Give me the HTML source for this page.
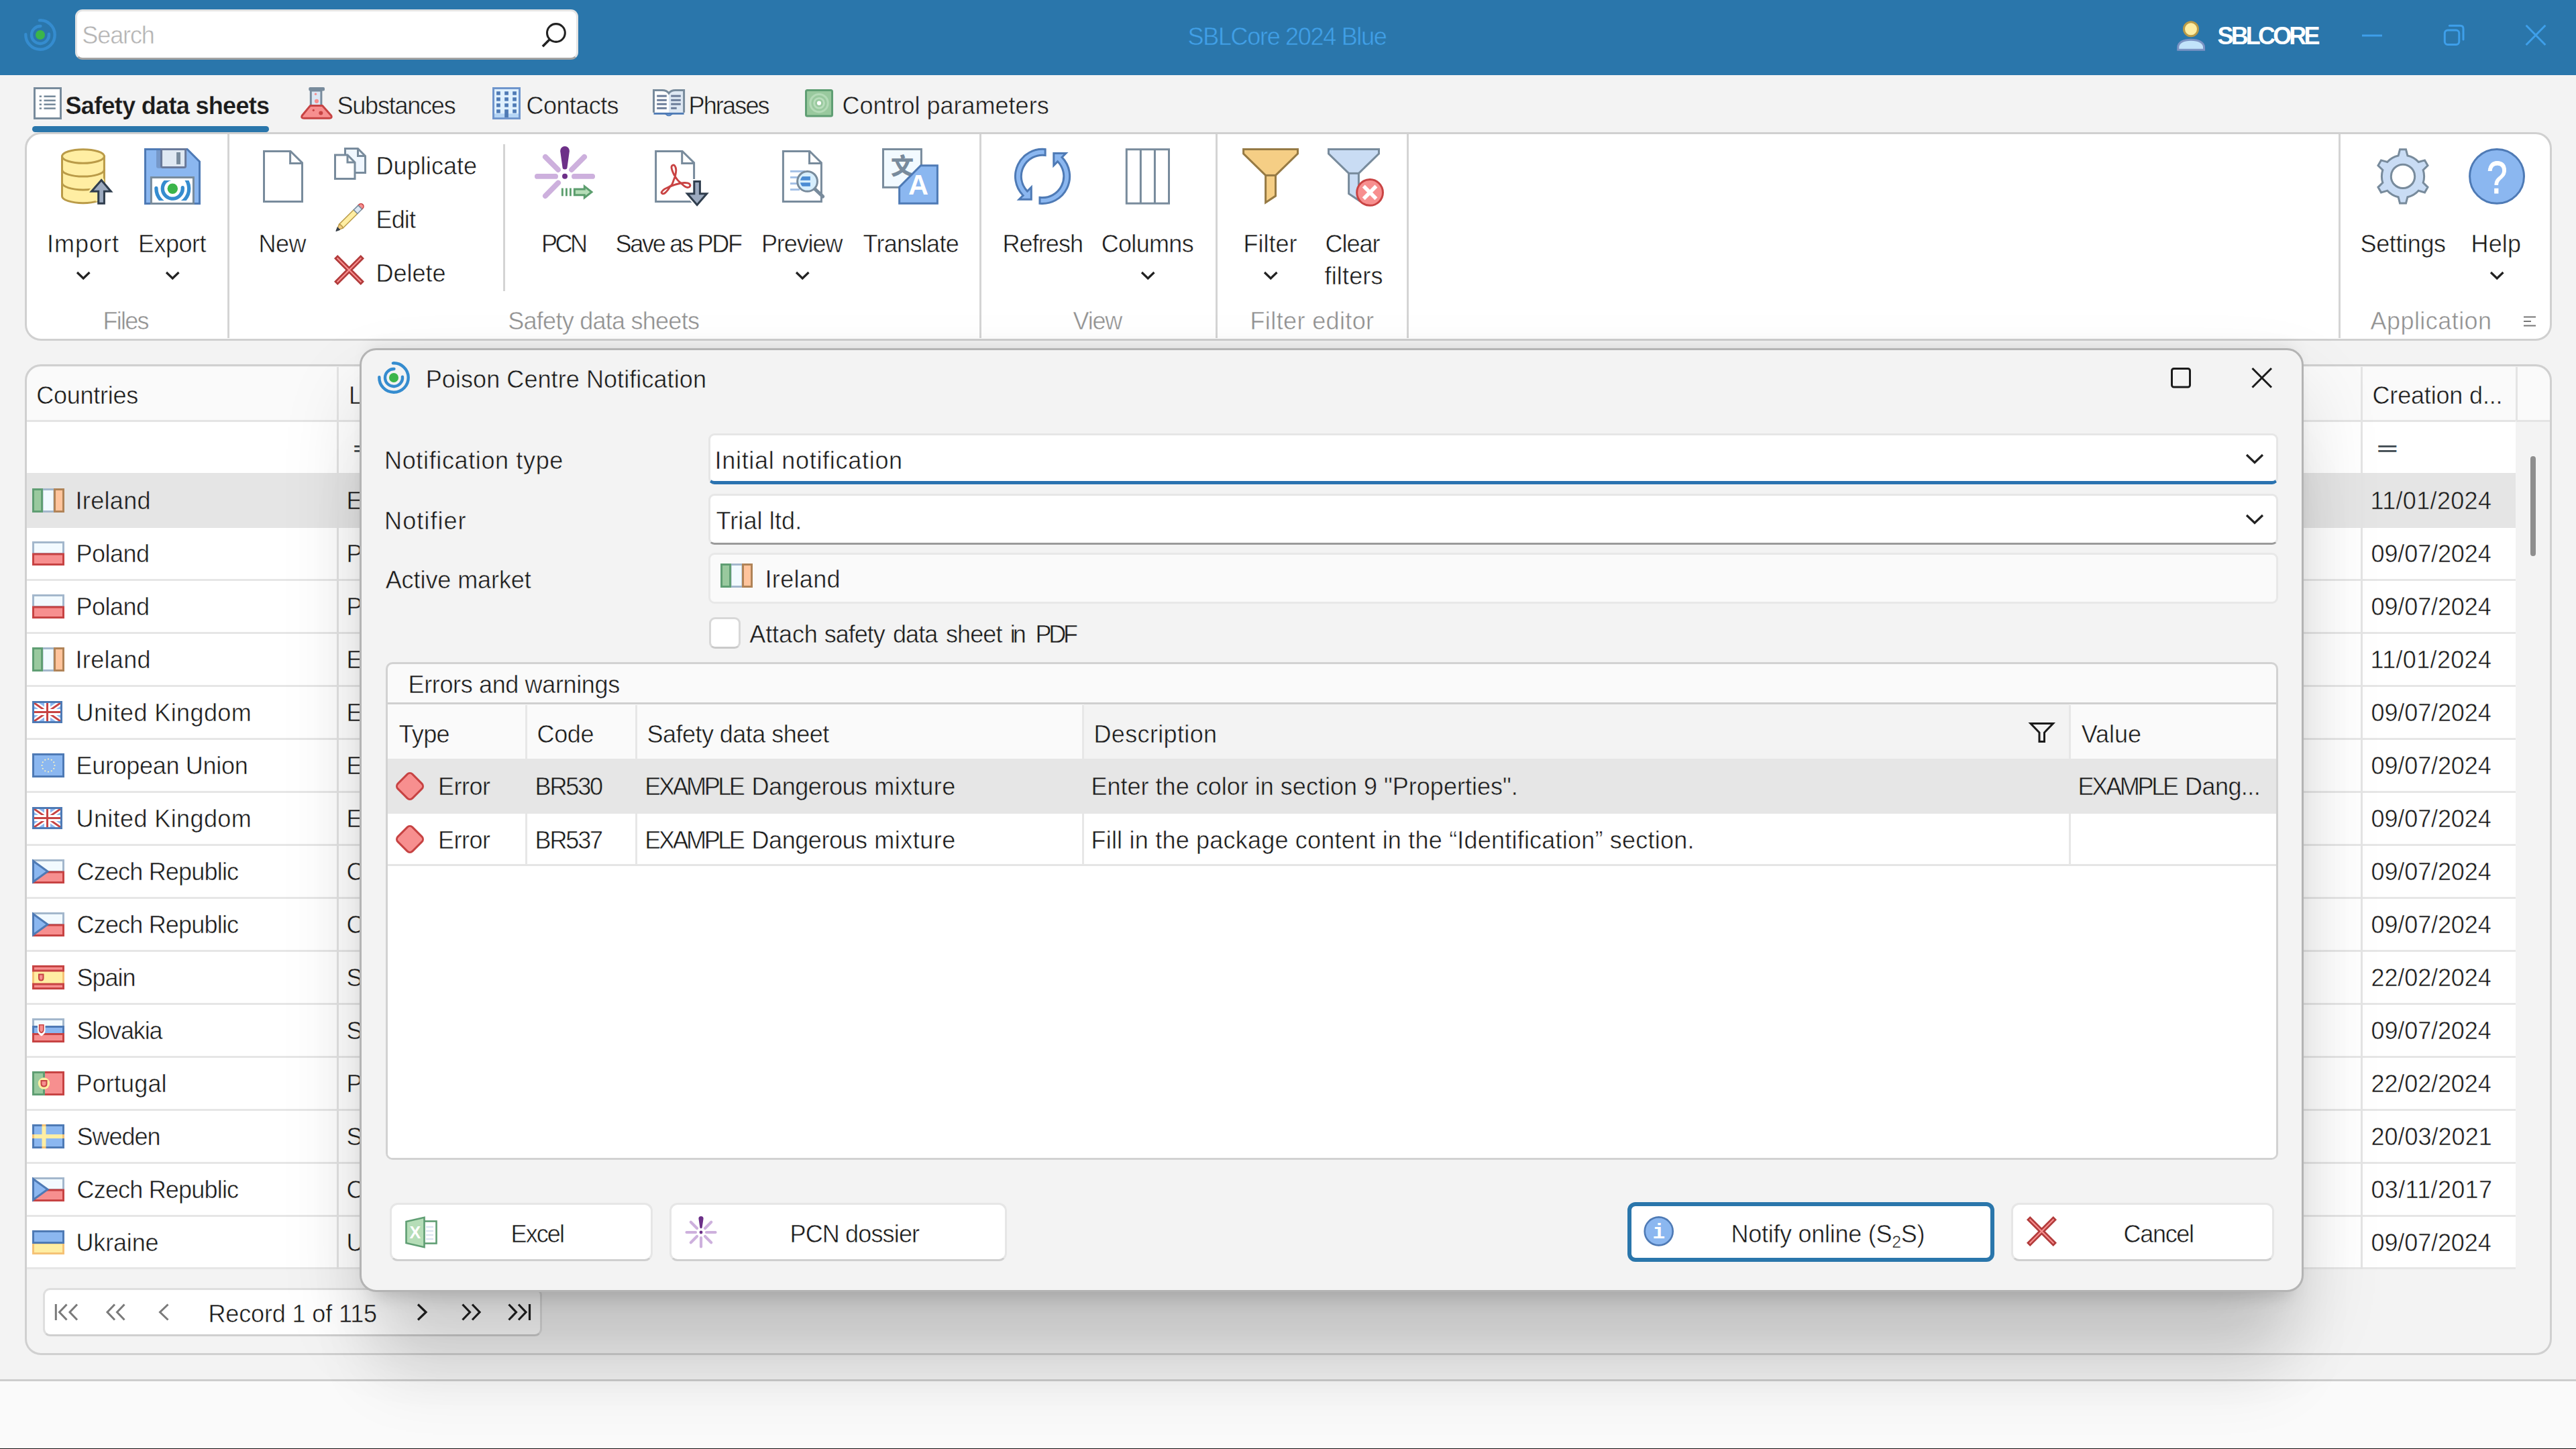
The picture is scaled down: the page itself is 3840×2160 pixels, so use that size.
<!DOCTYPE html>
<html lang="en"><head><meta charset="utf-8"><title>SBLCore 2024 Blue</title>
<style>
html,body{margin:0;padding:0;background:#f3f3f3}
body{width:3840px;height:2160px;overflow:hidden;position:relative;font-family:"Liberation Sans",sans-serif;font-size:36px;color:#1b1b1b}
#app{position:absolute;left:0;top:0;width:3840px;height:2160px;overflow:hidden;background:#f3f3f3}
.b{position:absolute;box-sizing:border-box}
.i{position:absolute;overflow:visible}
.t{position:absolute;white-space:nowrap;line-height:40px;height:40px;-webkit-text-stroke:.5px #fff}
.g3{-webkit-text-stroke-color:#f3f3f3}
.ga{-webkit-text-stroke-color:#fafafa}
.g5{-webkit-text-stroke-color:#e5e5e5}
.tb{-webkit-text-stroke-color:#2A76AB}
.bold{font-weight:700;-webkit-text-stroke-width:.25px}
.ph{color:#b4b4b4}
.ttl{color:#41A0E8}
.usr{color:#fff;font-weight:700;-webkit-text-stroke-width:0}
.grp{color:#919191}
.eq{color:#3f4a50;font-weight:700;-webkit-text-stroke-width:0;transform:scale(1.5,.72);transform-origin:0 55%}
.sub{font-size:25px;position:relative;top:8px}
.panel{border:3.5px solid #d0d0d0;border-radius:24px}
.search{background:#fff;border:3px solid #e4e4e4;border-bottom-color:#a3a3a3;border-radius:11px}
.dlg{background:#f3f3f3;border:3px solid #b4b4b4;border-radius:25px;box-shadow:0 150px 100px -30px rgba(0,0,0,.11),0 60px 120px rgba(0,0,0,.13),0 -14px 24px -12px rgba(0,0,0,.085),0 24px 28px -20px rgba(0,0,0,.18)}
.fld{background:#fff;border:3px solid #e6e6e6;border-radius:9px}
.btn{background:#fff;border:3px solid #e6e6e6;border-bottom-color:#cfcfcf;border-radius:12px}
</style></head>
<body><div id="app">
<div class="b" style="left:0;top:0;width:3840px;height:112px;background:#2A76AB"></div>
<svg class="i" style="left:34px;top:26px" width="52" height="52" viewBox="0 0 52 52"><circle cx="26" cy="26" r="7" fill="#3BB54A"/><path d="M26.45 13.01 A13 13 0 1 0 38.93 24.64 M24.86 4.33 A21.7 21.7 0 1 1 4.31 25.24" fill="none" stroke="#358CCF" stroke-width="4.4" stroke-linecap="round"/></svg>
<div class="b search" style="left:112px;top:14px;width:750px;height:75px"></div>
<span class="t ph" style="left:122.3px;top:33px;letter-spacing:-1.1px">Search</span>
<svg class="i" style="left:800px;top:30px" width="50" height="50" viewBox="0 0 50 50"><circle cx="28.9" cy="19" r="13.4" fill="none" stroke="#222" stroke-width="3.1"/><path d="M19.6 28.6 L8.9 39.3" stroke="#222" stroke-width="3.6"/></svg>
<span class="t ttl tb" style="left:1770.5px;top:34.5px;letter-spacing:-1.31px">SBLCore 2024 Blue</span>
<svg class="i" style="left:3240px;top:25px" width="52" height="56" viewBox="0 0 52 56"><path d="M6.7 49.2 V46 C6.7 38 15 34.3 26 34.3 C37 34.3 45.6 38 45.6 46 V49.2 Z" fill="#C2E3FA" stroke="#7B93C4" stroke-width="3"/><circle cx="26" cy="18.3" r="10.5" fill="#FFEEA3" stroke="#BA9B48" stroke-width="3"/></svg>
<span class="t usr tb" style="left:3305.5px;top:34px;letter-spacing:-3.83px">SBLCORE</span>
<svg class="i" style="left:3520px;top:25px" width="300" height="56" viewBox="0 0 300 56"><path d="M1 28 H31" stroke="#3E9FEA" stroke-width="3" fill="none"/><rect x="124.3" y="20" width="21.5" height="21.5" rx="4.5" fill="none" stroke="#3E9FEA" stroke-width="3"/><path d="M131.3 13.3 H147.5 Q152 13.3 152 17.8 V34 " fill="none" stroke="#3E9FEA" stroke-width="3" stroke-linecap="round"/><path d="M245.6 12.8 L274.4 42 M274.4 12.8 L245.6 42" stroke="#3E9FEA" stroke-width="3" fill="none"/></svg>
<svg class="i" style="left:50px;top:130px" width="42" height="48" viewBox="0 0 42 48"><rect x="1.5" y="1.5" width="39" height="45" fill="#fff" stroke="#788B9C" stroke-width="3"/><rect x="8.7" y="12.4" width="3.3" height="2.6" fill="#788B9C"/><rect x="15.5" y="12.4" width="17.3" height="2.6" fill="#788B9C"/><rect x="8.7" y="18.5" width="3.3" height="2.6" fill="#788B9C"/><rect x="15.5" y="18.5" width="17.3" height="2.6" fill="#788B9C"/><rect x="8.7" y="24.4" width="3.3" height="2.6" fill="#788B9C"/><rect x="15.5" y="24.4" width="17.3" height="2.6" fill="#788B9C"/><rect x="8.7" y="30.3" width="3.3" height="2.6" fill="#788B9C"/><rect x="15.5" y="30.3" width="17.3" height="2.6" fill="#788B9C"/></svg>
<span class="t bold g3" style="left:97.5px;top:137.5px;letter-spacing:-0.68px">Safety data sheets</span>
<div class="b" style="left:48px;top:188px;width:353.3px;height:8.7px;border-radius:4.4px;background:#2A76AB"></div>
<svg class="i" style="left:448px;top:130px" width="48" height="48" viewBox="0 0 48 48"><rect x="15.3" y="5" width="15.6" height="24" fill="#DCE8F4" stroke="#788B9C" stroke-width="3"/><rect x="12.3" y="0" width="23.7" height="5.6" rx="1.8" fill="#788B9C"/><path d="M14.6 27.4 L2.3 42.2 Q0.3 46.3 5 46.3 H43 Q47.6 46.3 45.7 42.2 L32.6 27.4 Z" fill="#F78F8F" stroke="#C74343" stroke-width="3" stroke-linejoin="round"/><circle cx="22.5" cy="10.3" r="1.7" fill="#F78F8F"/><circle cx="24" cy="20.8" r="3.1" fill="#F78F8F"/><circle cx="19.3" cy="34.3" r="1.6" fill="#C74343"/><circle cx="30.3" cy="38.5" r="3" fill="#C74343"/></svg>
<span class="t g3" style="left:502.5px;top:137.5px;letter-spacing:-1.22px">Substances</span>
<svg class="i" style="left:734px;top:130px" width="42" height="48" viewBox="0 0 42 48"><rect x="1.5" y="1.5" width="39" height="45" fill="#DFF0FE" stroke="#6F95CC" stroke-width="3"/><rect x="3" y="39.4" width="36" height="5.7" fill="#B5D5F5"/><rect x="6.1" y="6.3" width="5.7" height="5.4" fill="#4E7AB5"/><rect x="6.1" y="15.2" width="5.7" height="5.4" fill="#4E7AB5"/><rect x="6.1" y="24.2" width="5.7" height="5.4" fill="#4E7AB5"/><rect x="6.1" y="33.2" width="5.7" height="5.4" fill="#4E7AB5"/><rect x="18.2" y="6.3" width="5.7" height="5.4" fill="#4E7AB5"/><rect x="18.2" y="15.2" width="5.7" height="5.4" fill="#4E7AB5"/><rect x="18.2" y="24.2" width="5.7" height="5.4" fill="#4E7AB5"/><rect x="30.2" y="6.3" width="5.7" height="5.4" fill="#4E7AB5"/><rect x="30.2" y="15.2" width="5.7" height="5.4" fill="#4E7AB5"/><rect x="30.2" y="24.2" width="5.7" height="5.4" fill="#4E7AB5"/><rect x="30.2" y="33.2" width="5.7" height="5.4" fill="#4E7AB5"/><rect x="18.2" y="33.2" width="5.7" height="11.9" fill="#4E7AB5"/></svg>
<span class="t g3" style="left:784.5px;top:137.5px;letter-spacing:-0.57px">Contacts</span>
<svg class="i" style="left:973px;top:133.2px" width="48.2" height="44" viewBox="0 0 48.2 44"><path d="M1.5 36.2 H46.6" stroke="#4E7AB5" stroke-width="3.2"/><path d="M19 37 Q24 42 29 37 Z" fill="#8BB7F0" stroke="#4E7AB5" stroke-width="1.5"/><path d="M24 6 Q21 1.5 14 1.5 H1.5 V34.7 H24 Z" fill="#fff"/><path d="M24 6 Q27 1.5 34 1.5 H46.6 V34.7 H24 Z" fill="#DEE8F3"/><path d="M1.5 34.7 V1.5 H14 Q21 1.5 24 6 Q27 1.5 34 1.5 H46.6 V34.7" fill="none" stroke="#788B9C" stroke-width="3"/><rect x="6.2" y="8.6" width="14.6" height="3" fill="#6B7C99"/><rect x="27.2" y="8.6" width="14.6" height="3" fill="#6B7C99"/><rect x="6.2" y="14.8" width="14.6" height="3" fill="#6B7C99"/><rect x="27.2" y="14.8" width="14.6" height="3" fill="#6B7C99"/><rect x="6.2" y="20.7" width="14.6" height="3" fill="#6B7C99"/><rect x="27.2" y="20.7" width="14.6" height="3" fill="#6B7C99"/><rect x="6.2" y="26.8" width="14.6" height="3" fill="#6B7C99"/><rect x="27.2" y="26.8" width="8.5" height="3" fill="#6B7C99"/></svg>
<span class="t g3" style="left:1026.5px;top:137.5px;letter-spacing:-1.83px">Phrases</span>
<svg class="i" style="left:1200px;top:133.2px" width="42" height="42" viewBox="0 0 42 42"><rect x="1.5" y="1.5" width="39" height="38.5" rx="2" fill="#99C99E" stroke="#5F9E73" stroke-width="3"/><circle cx="21" cy="20.7" r="14.7" fill="#B4DAB7"/><circle cx="21" cy="20.7" r="11.6" fill="#99C99E"/><circle cx="21" cy="20.7" r="8.8" fill="#B9DDBC"/><circle cx="21" cy="20.7" r="6" fill="#99C99E"/><circle cx="21" cy="20.7" r="3.1" fill="#fff"/></svg>
<span class="t g3" style="left:1255.5px;top:137.5px">Control parameters</span>
<div class="b panel" style="left:36.5px;top:197px;width:3767.5px;height:310.5px;background:#fff"></div>
<div class="b" style="left:338.5px;top:200px;width:3.2px;height:304px;background:#d4d4d4"></div>
<div class="b" style="left:1459.5px;top:200px;width:3.2px;height:304px;background:#d4d4d4"></div>
<div class="b" style="left:1811.5px;top:200px;width:3.2px;height:304px;background:#d4d4d4"></div>
<div class="b" style="left:2096.5px;top:200px;width:3.2px;height:304px;background:#d4d4d4"></div>
<div class="b" style="left:3485.5px;top:200px;width:3.2px;height:304px;background:#d4d4d4"></div>
<div class="b" style="left:750px;top:215px;width:3px;height:219px;background:#d4d4d4"></div>
<svg class="i" style="left:84px;top:216px" width="90" height="92" viewBox="84 216 90 92"><clipPath id="cyl"><path d="M92.5 233 V292.4 A31.45 10.3 0 0 0 155.4 292.4 V233 A31.45 10.3 0 0 0 92.5 233 Z"/></clipPath><path d="M92.5 233 V292.4 A31.45 10.3 0 0 0 155.4 292.4 V233 Z" fill="#FFEEA3" stroke="#BA9B48" stroke-width="3"/><ellipse cx="123.95" cy="233" rx="31.45" ry="10.3" fill="#FFEEA3" stroke="#BA9B48" stroke-width="3"/><path d="M92.5 252.8 A31.45 10.3 0 0 0 155.4 252.8 M92.5 272.6 A31.45 10.3 0 0 0 155.4 272.6" fill="none" stroke="#BA9B48" stroke-width="3"/><path d="M151.1 268.56 L165.35 285.25 H155.4 V303.3 H146.7 V285.25 H136.45 Z" fill="#FFEEA3" stroke="#FFEEA3" stroke-width="8" clip-path="url(#cyl)"/><path d="M151.1 268.56 L165.35 285.25 H155.4 V303.3 H146.7 V285.25 H136.45 Z" fill="#9CAABF" stroke="#2F3D4D" stroke-width="3"/></svg>
<span class="t" style="left:69.9px;top:344px;letter-spacing:1px">Import</span>
<svg class="i" style="left:112.85px;top:403.5px" width="22.5" height="14" viewBox="0 0 22.5 14"><path d="M2 2 L11.25 11 L20.5 2" fill="none" stroke="#222" stroke-width="3.2"/></svg>
<svg class="i" style="left:210px;top:216px" width="96" height="92" viewBox="210 216 96 92"><path d="M216.5 222.4 H279.1 L297.5 240.9 V303.4 H216.5 Z" fill="#8BB7F0" stroke="#4E7AB5" stroke-width="3"/><path d="M233 223.9 H240 V250.7 H236 Q233 250.7 233 247.7 Z" fill="#7698C9"/><path d="M240.55 222.4 H276.6 V247.5 Q276.6 249.5 274.6 249.5 H242.55 Q240.55 249.5 240.55 247.5 Z" fill="#DFE8F2" stroke="#69799A" stroke-width="3"/><rect x="263.05" y="227" width="5.95" height="17.9" fill="#788B9C"/><rect x="225.4" y="264.5" width="63" height="39" fill="#fff" stroke="#788B9C" stroke-width="3"/><clipPath id="lbl"><rect x="227" y="269" width="60" height="29.9"/></clipPath><g clip-path="url(#lbl)"><circle cx="257.3" cy="281.2" r="7.7" fill="#3BB54A"/><path d="M257.82 266.21 A15 15 0 1 0 272.22 279.63 M256.02 256.83 A24.4 24.4 0 1 1 232.91 280.35" fill="none" stroke="#358CCF" stroke-width="5.3" stroke-linecap="round"/></g></svg>
<span class="t" style="left:205.9px;top:344px;letter-spacing:-0.5px">Export</span>
<svg class="i" style="left:245.75px;top:403.5px" width="22.5" height="14" viewBox="0 0 22.5 14"><path d="M2 2 L11.25 11 L20.5 2" fill="none" stroke="#222" stroke-width="3.2"/></svg>
<svg class="i" style="left:380px;top:216px" width="96" height="92" viewBox="380 216 96 92"><path d="M393.5 225.4 H433.1 L450.5 242.6 V300.4 H393.5 Z" fill="#fff" stroke="#788B9C" stroke-width="3"/><path d="M432.6 225.4 V243.4 H450.5" fill="none" stroke="#788B9C" stroke-width="3"/></svg>
<span class="t" style="left:385.5px;top:344px;letter-spacing:-0.5px">New</span>
<svg class="i" style="left:498px;top:220px" width="48" height="48" viewBox="0 0 48 48"><path d="M16.5 1.5 H35.5 L46.5 12.5 V37.5 H16.5 Z" fill="#F0F7FF" stroke="#788B9C" stroke-width="3"/><path d="M35.5 1.5 V12.5 H46.5" fill="none" stroke="#788B9C" stroke-width="3"/><path d="M1.5 11 H20 L31 22 V46.5 H1.5 Z" fill="#fff" stroke="#788B9C" stroke-width="3"/><path d="M20 11 V22 H31" fill="none" stroke="#788B9C" stroke-width="3"/></svg>
<span class="t" style="left:560.5px;top:227.5px;letter-spacing:0.07px">Duplicate</span>
<svg class="i" style="left:498px;top:303px" width="50" height="48" viewBox="0 0 50 48" overflow="visible"><g transform="translate(2.97 41.5) rotate(-44.8)"><path d="M10.5 -4 H41 V4 H10.5 Z" fill="#FFEEA3" stroke="#BA9B48" stroke-width="1.5"/><path d="M1 0 L10.5 -4 Q12.6 0 10.5 4 Z" fill="#F5CE85" stroke="#BA9B48" stroke-width="1.5" stroke-linejoin="round"/><path d="M0 0 L5.4 -2.5 V2.5 Z" fill="#36404D" stroke="#36404D" stroke-width="1" stroke-linejoin="round"/><path d="M50 -4 H52.2 A4 4 0 0 1 52.2 4 H50 Z" fill="#F78F8F" stroke="#C74343" stroke-width="1.5"/><rect x="41" y="-4" width="9.5" height="8" fill="#DCE8F4" stroke="#788B9C" stroke-width="1.5"/></g></svg>
<span class="t" style="left:560.5px;top:307.5px;letter-spacing:-0.83px">Edit</span>
<svg class="i" style="left:498px;top:380.1px" width="45" height="45" viewBox="0 0 45 45"><path d="M2.62 2.62 L42.38 42.38 M42.38 2.62 L2.62 42.38" stroke="#B23B3B" stroke-width="7.4" fill="none"/><path d="M4.52 4.52 L40.48 40.48 M40.48 4.52 L4.52 40.48" stroke="#F78F8F" stroke-width="2" fill="none"/></svg>
<span class="t" style="left:560.5px;top:387.5px">Delete</span>
<svg class="i" style="left:790px;top:210px" width="104" height="96" viewBox="790 210 104 96"><g stroke="#CDB0DD" stroke-width="7.9" stroke-linecap="round" fill="none"><path d="M800.9 262.9 H828.05 M855.95 262.9 H883.1 M812.95 233.9 L832 252.95 M871.05 233.9 L852 252.95 M812.95 292.1 L832.1 272.6"/></g><path d="M835.13 224.9 A6.9 6.9 0 0 1 848.93 224.9 L845.63 249 A3.6 3.6 0 0 1 838.43 249 Z" fill="#6D3088"/><circle cx="842.03" cy="262.8" r="4" fill="#6D3088"/><path d="M838.35 280.44 V292.13 M844.41 280.44 V292.13 M850.41 280.44 V292.13" stroke="#5C9E6E" stroke-width="2.85"/><path d="M856.36 281.94 H871.3 V277.93 L881.96 286.3 L871.3 294.67 V290.63 H856.36 Z" fill="#B5DDB7" stroke="#5C9E6E" stroke-width="3"/></svg>
<span class="t" style="left:806.9px;top:344px;letter-spacing:-3.5px">PCN</span>
<svg class="i" style="left:968px;top:216px" width="96" height="96" viewBox="968 216 96 96"><path d="M977.6 225.45 H1017.2 L1034.6 242.65 V300.45 H977.6 Z" fill="#fff" stroke="#788B9C" stroke-width="3"/><path d="M1016.7 225.45 V243.45 H1034.6" fill="none" stroke="#788B9C" stroke-width="3"/><path d="M986.22 286.38 C986.7 285.24 988.71 283.23 990.53 281.94 C992.35 280.65 995.34 279.73 997.16 278.62 C998.98 277.52 1000.27 277.02 1001.47 275.31 C1002.66 273.6 1003.43 270.73 1004.32 268.35 C1005.2 265.98 1006.19 263.6 1006.77 261.06 C1007.34 258.52 1007.87 255.37 1007.76 253.11 C1007.65 250.85 1006.88 248.64 1006.1 247.48 C1005.33 246.32 1003.97 245.93 1003.12 246.15 C1002.27 246.37 1001.2 247.53 1001 248.8 C1000.8 250.07 1001.24 251.73 1001.93 253.77 C1002.61 255.82 1003.75 258.63 1005.11 261.06 C1006.47 263.49 1008.31 266.25 1010.08 268.35 C1011.85 270.45 1013.89 272.05 1015.71 273.65 C1017.54 275.26 1019.36 277 1021.02 277.96 C1022.67 278.92 1024.38 279.53 1025.65 279.42 C1026.92 279.31 1028.25 278.15 1028.64 277.3 C1029.02 276.45 1028.58 275.06 1027.97 274.32 C1027.37 273.58 1026.37 273.16 1024.99 272.86 C1023.61 272.56 1021.68 272.42 1019.69 272.53 C1017.7 272.64 1015.49 273 1013.06 273.52 C1010.63 274.04 1007.43 274.87 1005.11 275.64 C1002.79 276.42 1000.69 276.95 999.15 278.16 C997.6 279.38 997.16 281.34 995.83 282.93 C994.51 284.52 992.55 286.73 991.19 287.7 C989.84 288.68 988.51 288.98 987.68 288.76 C986.85 288.54 985.75 287.52 986.22 286.38 Z" fill="none" stroke="#C94343" stroke-width="2.9" stroke-linejoin="round"/><path d="M1034.8 270.5 H1043.4 V288.7 H1053.55 L1039.1 305.5 L1024.55 288.7 H1034.8 Z" fill="#fff" stroke="#fff" stroke-width="7"/><path d="M1034.8 270.5 H1043.4 V288.7 H1053.55 L1039.1 305.5 L1024.55 288.7 H1034.8 Z" fill="#9CAABF" stroke="#2F3D4D" stroke-width="3"/></svg>
<span class="t" style="left:917.5px;top:344px;letter-spacing:-2.25px">Save as PDF</span>
<svg class="i" style="left:1156px;top:216px" width="96" height="96" viewBox="1156 216 96 96"><path d="M1167.4 225.45 H1207 L1224.4 242.65 V300.45 H1167.4 Z" fill="#fff" stroke="#788B9C" stroke-width="3"/><path d="M1206.5 225.45 V243.45 H1224.4" fill="none" stroke="#788B9C" stroke-width="3"/><rect x="1178" y="253.9" width="21.7" height="3" fill="#A3C0E6"/><rect x="1178" y="262.9" width="14" height="3" fill="#A3C0E6"/><rect x="1178" y="272.1" width="14" height="3" fill="#A3C0E6"/><rect x="1178" y="281.1" width="14" height="3" fill="#A3C0E6"/><path d="M1214.3 281.3 L1226.6 292.9" stroke="#788B9C" stroke-width="5.2" stroke-linecap="round"/><circle cx="1203.55" cy="270.44" r="14.9" fill="#D6EEFD" stroke="#788B9C" stroke-width="3"/><clipPath id="mg"><circle cx="1203.55" cy="270.44" r="10.6"/></clipPath><g clip-path="url(#mg)"><rect x="1190" y="263.05" width="17.9" height="5.75" fill="#4A8BD3"/><rect x="1190" y="272.2" width="17.9" height="5.55" fill="#4A8BD3"/></g></svg>
<span class="t" style="left:1134.9px;top:344px;letter-spacing:-1.08px">Preview</span>
<svg class="i" style="left:1185.05px;top:403.5px" width="22.5" height="14" viewBox="0 0 22.5 14"><path d="M2 2 L11.25 11 L20.5 2" fill="none" stroke="#222" stroke-width="3.2"/></svg>
<svg class="i" style="left:1308px;top:216px" width="96" height="96" viewBox="1308 216 96 96"><rect x="1316.46" y="222.47" width="56.94" height="56.83" fill="#F2FAFF" stroke="#788B9C" stroke-width="3"/><text x="1345" y="259.6" text-anchor="middle" font-family="'Liberation Sans','Noto Sans CJK SC',sans-serif" font-size="34" font-weight="900" fill="#788B9C">文</text><path d="M1340.65 278.9 L1372.55 246.66 H1397.4 V303.3 H1340.65 Z" fill="#8BB7F0" stroke="#4E7AB5" stroke-width="3"/><text x="1369.1" y="289.9" text-anchor="middle" font-family="'Liberation Sans',sans-serif" font-size="41.6" font-weight="700" fill="#fff">A</text></svg>
<span class="t" style="left:1286.5px;top:344px;letter-spacing:-0.69px">Translate</span>
<svg class="i" style="left:1506px;top:216px" width="96" height="96" viewBox="1506 216 96 96"><path d="M1558.15 222.51 A40.6 40.6 0 0 0 1525.12 291.38 L1519.2 297.3 L1537.3 297.3 L1537.3 279.2 L1531.41 285.09 A31.7 31.7 0 0 1 1558.13 231.46 Z" fill="#8BB7F0" stroke="#4E7AB5" stroke-width="3" stroke-linejoin="miter"/><g transform="rotate(180 1554.05 262.9)"><path d="M1558.15 222.51 A40.6 40.6 0 0 0 1525.12 291.38 L1519.2 297.3 L1537.3 297.3 L1537.3 279.2 L1531.41 285.09 A31.7 31.7 0 0 1 1558.13 231.46 Z" fill="#8BB7F0" stroke="#4E7AB5" stroke-width="3" stroke-linejoin="miter"/></g></svg>
<span class="t" style="left:1494.5px;top:344px;letter-spacing:-0.92px">Refresh</span>
<svg class="i" style="left:1672px;top:216px" width="78" height="96" viewBox="1672 216 78 96"><rect x="1679.3" y="222.7" width="63.2" height="80.5" fill="#fff" stroke="#788B9C" stroke-width="3"/><path d="M1700.37 222.7 V303.2 M1721.43 222.7 V303.2" stroke="#788B9C" stroke-width="3"/></svg>
<span class="t" style="left:1641.7px;top:344px;letter-spacing:-0.67px">Columns</span>
<svg class="i" style="left:1699.75px;top:403.5px" width="22.5" height="14" viewBox="0 0 22.5 14"><path d="M2 2 L11.25 11 L20.5 2" fill="none" stroke="#222" stroke-width="3.2"/></svg>
<svg class="i" style="left:1846px;top:216px" width="96" height="96" viewBox="1846 216 96 96"><path d="M1853.6 222.47 H1934.5 V229 L1901.5 261.4 V292.1 L1886.6 302 V261.4 L1853.6 229 Z" fill="#F5CE85" stroke="#967A44" stroke-width="3"/><path d="M1886.6 261.4 H1901.5" stroke="#967A44" stroke-width="3"/></svg>
<span class="t" style="left:1853.5px;top:344px">Filter</span>
<svg class="i" style="left:1882.75px;top:403.5px" width="22.5" height="14" viewBox="0 0 22.5 14"><path d="M2 2 L11.25 11 L20.5 2" fill="none" stroke="#222" stroke-width="3.2"/></svg>
<svg class="i" style="left:1972px;top:216px" width="96" height="96" viewBox="1972 216 96 96"><path d="M1980.46 222.47 H2055.46 V229 L2025.4 258.4 V298.6 L2010.6 288.8 V258.4 L1980.46 229 Z" fill="#C9DCF4" stroke="#788B9C" stroke-width="3"/><path d="M2010.6 258.4 H2025.4" stroke="#788B9C" stroke-width="3"/><circle cx="2042.05" cy="286.97" r="19.4" fill="#F78F8F" stroke="#C94343" stroke-width="3"/><path d="M2032.7 277.6 L2051.4 296.3 M2051.4 277.6 L2032.7 296.3" stroke="#fff" stroke-width="5.6"/></svg>
<span class="t" style="left:1975.5px;top:344px;letter-spacing:-1px">Clear</span>
<span class="t" style="left:1974.5px;top:391.5px;letter-spacing:0.17px">filters</span>
<svg class="i" style="left:3534px;top:216px" width="96" height="96" viewBox="3534 216 96 96"><path d="M3575.11 232.06 L3577.5 222.75 L3586.5 222.75 L3588.89 232.06 A31.6 31.6 0 0 1 3605.26 241.51 L3614.52 238.93 L3619.02 246.73 L3612.15 253.45 A31.6 31.6 0 0 1 3612.15 272.35 L3619.02 279.07 L3614.52 286.87 L3605.26 284.29 A31.6 31.6 0 0 1 3588.89 293.74 L3586.5 303.05 L3577.5 303.05 L3575.11 293.74 A31.6 31.6 0 0 1 3558.74 284.29 L3549.48 286.87 L3544.98 279.07 L3551.85 272.35 A31.6 31.6 0 0 1 3551.85 253.45 L3544.98 246.73 L3549.48 238.93 L3558.74 241.51 A31.6 31.6 0 0 1 3575.11 232.06 Z" fill="#C9DCF4" stroke="#788B9C" stroke-width="3" stroke-linejoin="miter"/><circle cx="3582" cy="262.9" r="17.7" fill="#fff" stroke="#788B9C" stroke-width="3"/></svg>
<span class="t" style="left:3518.5px;top:344px;letter-spacing:-0.36px">Settings</span>
<svg class="i" style="left:3674px;top:216px" width="96" height="96" viewBox="3674 216 96 96"><circle cx="3722.05" cy="262.9" r="40.45" fill="#8BB7F0" stroke="#4E7AB5" stroke-width="3"/><text transform="translate(3722.3 288) scale(0.8 1)" text-anchor="middle" font-family="'Liberation Sans',sans-serif" font-size="68.5" fill="#fff" stroke="#fff" stroke-width="1.1">?</text></svg>
<span class="t" style="left:3683.5px;top:344px;letter-spacing:0.17px">Help</span>
<svg class="i" style="left:3710.75px;top:403.5px" width="22.5" height="14" viewBox="0 0 22.5 14"><path d="M2 2 L11.25 11 L20.5 2" fill="none" stroke="#222" stroke-width="3.2"/></svg>
<span class="t grp" style="left:153.5px;top:459px;letter-spacing:-1.75px">Files</span>
<span class="t grp" style="left:757.3px;top:459px;letter-spacing:-0.74px">Safety data sheets</span>
<span class="t grp" style="left:1599.5px;top:459px;letter-spacing:-1.17px">View</span>
<span class="t grp" style="left:1863.5px;top:459px;letter-spacing:0.38px">Filter editor</span>
<span class="t grp" style="left:3533.5px;top:459px;letter-spacing:0.45px">Application</span>
<svg class="i" style="left:3761px;top:470px" width="20" height="18" viewBox="0 0 20 18"><path d="M1 2.5 H19 M1 9 H12 M1 15.5 H19" stroke="#777" stroke-width="2.2"/></svg>
<div class="b" style="left:40px;top:547px;width:3710px;height:80px;background:#fafafa;border-top-left-radius:20px"></div>
<div class="b" style="left:40px;top:626px;width:3710px;height:3px;background:#e4e4e4"></div>
<div class="b" style="left:3751px;top:547px;width:49.5px;height:80px;background:#fafafa;border-top-right-radius:20px"></div>
<div class="b" style="left:3751px;top:626px;width:49.5px;height:3px;background:#e4e4e4"></div>
<div class="b" style="left:40px;top:629px;width:3710px;height:76px;background:#fff"></div>
<div class="b" style="left:40px;top:705px;width:3710px;height:1187px;background:#fff"></div>
<div class="b" style="left:40px;top:705px;width:3710px;height:82px;background:#e5e5e5"></div>
<div class="b" style="left:40px;top:862.5px;width:3710px;height:3px;background:#e6e6e6"></div>
<div class="b" style="left:40px;top:941.5px;width:3710px;height:3px;background:#e6e6e6"></div>
<div class="b" style="left:40px;top:1020.5px;width:3710px;height:3px;background:#e6e6e6"></div>
<div class="b" style="left:40px;top:1099.5px;width:3710px;height:3px;background:#e6e6e6"></div>
<div class="b" style="left:40px;top:1178.5px;width:3710px;height:3px;background:#e6e6e6"></div>
<div class="b" style="left:40px;top:1257.5px;width:3710px;height:3px;background:#e6e6e6"></div>
<div class="b" style="left:40px;top:1336.5px;width:3710px;height:3px;background:#e6e6e6"></div>
<div class="b" style="left:40px;top:1415.5px;width:3710px;height:3px;background:#e6e6e6"></div>
<div class="b" style="left:40px;top:1494.5px;width:3710px;height:3px;background:#e6e6e6"></div>
<div class="b" style="left:40px;top:1573.5px;width:3710px;height:3px;background:#e6e6e6"></div>
<div class="b" style="left:40px;top:1652.5px;width:3710px;height:3px;background:#e6e6e6"></div>
<div class="b" style="left:40px;top:1731.5px;width:3710px;height:3px;background:#e6e6e6"></div>
<div class="b" style="left:40px;top:1810.5px;width:3710px;height:3px;background:#e6e6e6"></div>
<div class="b" style="left:40px;top:1889.5px;width:3710px;height:3px;background:#e6e6e6"></div>
<div class="b" style="left:40px;top:1889px;width:3710px;height:3px;background:#e6e6e6"></div>
<div class="b" style="left:40px;top:1892px;width:3710px;height:125px;background:#f3f3f3"></div>
<div class="b" style="left:501.5px;top:547px;width:3.2px;height:1345px;background:#e4e4e4"></div>
<div class="b" style="left:3518.5px;top:547px;width:3.2px;height:1345px;background:#e4e4e4"></div>
<div class="b" style="left:3749.5px;top:547px;width:3.2px;height:80px;background:#e4e4e4"></div>
<span class="t ga" style="left:54.3px;top:569.5px;letter-spacing:-0.25px">Countries</span>
<span class="t ga" style="left:520px;top:569.5px;letter-spacing:-0.4px">Language</span>
<span class="t ga" style="left:3536.5px;top:569.5px;letter-spacing:-0.17px">Creation d...</span>
<span class="t eq" style="left:525.5px;top:649px">=</span>
<span class="t eq" style="left:3542.5px;top:649px">=</span>
<svg class="i" style="left:48px;top:727.5px" width="48" height="36" viewBox="0 0 48 36"><rect x="15" y="1.5" width="18" height="33" fill="#F2FAFF" stroke="#A3B7CC" stroke-width="3"/><rect x="1.5" y="1.5" width="13" height="33" fill="#99C99E" stroke="#5F9E73" stroke-width="3"/><rect x="33.5" y="1.5" width="13" height="33" fill="#FFC49C" stroke="#B08357" stroke-width="3"/></svg>
<span class="t g5" style="left:112.5px;top:727px;letter-spacing:0.33px">Ireland</span>
<span class="t g5" style="left:516.5px;top:727px;letter-spacing:-0.4px">English</span>
<span class="t g5" style="left:3533.5px;top:727px;letter-spacing:0.33px">11/01/2024</span>
<svg class="i" style="left:48px;top:806.5px" width="48" height="36" viewBox="0 0 48 36"><rect x="1.5" y="1.5" width="45" height="17" fill="#F2FAFF" stroke="#A3B7CC" stroke-width="3"/><rect x="1.5" y="19" width="45" height="15.5" fill="#F78F8F" stroke="#C74343" stroke-width="3"/></svg>
<span class="t" style="left:113.5px;top:806px;letter-spacing:-0.5px">Poland</span>
<span class="t" style="left:516.5px;top:806px;letter-spacing:-0.4px">Polish</span>
<span class="t" style="left:3534.5px;top:806px;letter-spacing:-0.11px">09/07/2024</span>
<svg class="i" style="left:48px;top:885.5px" width="48" height="36" viewBox="0 0 48 36"><rect x="1.5" y="1.5" width="45" height="17" fill="#F2FAFF" stroke="#A3B7CC" stroke-width="3"/><rect x="1.5" y="19" width="45" height="15.5" fill="#F78F8F" stroke="#C74343" stroke-width="3"/></svg>
<span class="t" style="left:113.5px;top:885px;letter-spacing:-0.5px">Poland</span>
<span class="t" style="left:516.5px;top:885px;letter-spacing:-0.4px">Polish</span>
<span class="t" style="left:3534.5px;top:885px;letter-spacing:-0.11px">09/07/2024</span>
<svg class="i" style="left:48px;top:964.5px" width="48" height="36" viewBox="0 0 48 36"><rect x="15" y="1.5" width="18" height="33" fill="#F2FAFF" stroke="#A3B7CC" stroke-width="3"/><rect x="1.5" y="1.5" width="13" height="33" fill="#99C99E" stroke="#5F9E73" stroke-width="3"/><rect x="33.5" y="1.5" width="13" height="33" fill="#FFC49C" stroke="#B08357" stroke-width="3"/></svg>
<span class="t" style="left:112.5px;top:964px;letter-spacing:0.33px">Ireland</span>
<span class="t" style="left:516.5px;top:964px;letter-spacing:-0.4px">English</span>
<span class="t" style="left:3533.5px;top:964px;letter-spacing:0.33px">11/01/2024</span>
<svg class="i" style="left:48px;top:1045px" width="45" height="33" viewBox="0 0 45 33"><rect x="1.5" y="1.5" width="42" height="30" fill="#8BB7F0" stroke="#4E7AB5" stroke-width="3"/><clipPath id="ukc1"><rect x="3" y="3" width="39" height="27"/></clipPath><g clip-path="url(#ukc1)"><path d="M3 3 L42 30 M42 3 L3 30" stroke="#fff" stroke-width="8"/><path d="M3 3 L42 30 M42 3 L3 30" stroke="#C74343" stroke-width="3"/><path d="M22.5 3 V30 M3 16.5 H42" stroke="#fff" stroke-width="9"/><path d="M22.5 3 V30 M3 16.5 H42" stroke="#C74343" stroke-width="3"/></g></svg>
<span class="t" style="left:113.5px;top:1043px;letter-spacing:0.39px">United Kingdom</span>
<span class="t" style="left:516.5px;top:1043px;letter-spacing:-0.4px">English</span>
<span class="t" style="left:3534.5px;top:1043px;letter-spacing:-0.11px">09/07/2024</span>
<svg class="i" style="left:48px;top:1122.5px" width="48" height="36" viewBox="0 0 48 36"><rect x="1.5" y="1.5" width="45" height="33" fill="#8BB7F0" stroke="#4E7AB5" stroke-width="3"/><circle cx="33.5" cy="18" r="1.1" fill="#FFF5C0"/><circle cx="32.23" cy="22.75" r="1.1" fill="#FFF5C0"/><circle cx="28.75" cy="26.23" r="1.1" fill="#FFF5C0"/><circle cx="24" cy="27.5" r="1.1" fill="#FFF5C0"/><circle cx="19.25" cy="26.23" r="1.1" fill="#FFF5C0"/><circle cx="15.77" cy="22.75" r="1.1" fill="#FFF5C0"/><circle cx="14.5" cy="18" r="1.1" fill="#FFF5C0"/><circle cx="15.77" cy="13.25" r="1.1" fill="#FFF5C0"/><circle cx="19.25" cy="9.77" r="1.1" fill="#FFF5C0"/><circle cx="24" cy="8.5" r="1.1" fill="#FFF5C0"/><circle cx="28.75" cy="9.77" r="1.1" fill="#FFF5C0"/><circle cx="32.23" cy="13.25" r="1.1" fill="#FFF5C0"/></svg>
<span class="t" style="left:113.5px;top:1122px;letter-spacing:-0.31px">European Union</span>
<span class="t" style="left:516.5px;top:1122px;letter-spacing:-0.4px">English</span>
<span class="t" style="left:3534.5px;top:1122px;letter-spacing:-0.11px">09/07/2024</span>
<svg class="i" style="left:48px;top:1203px" width="45" height="33" viewBox="0 0 45 33"><rect x="1.5" y="1.5" width="42" height="30" fill="#8BB7F0" stroke="#4E7AB5" stroke-width="3"/><clipPath id="ukc2"><rect x="3" y="3" width="39" height="27"/></clipPath><g clip-path="url(#ukc2)"><path d="M3 3 L42 30 M42 3 L3 30" stroke="#fff" stroke-width="8"/><path d="M3 3 L42 30 M42 3 L3 30" stroke="#C74343" stroke-width="3"/><path d="M22.5 3 V30 M3 16.5 H42" stroke="#fff" stroke-width="9"/><path d="M22.5 3 V30 M3 16.5 H42" stroke="#C74343" stroke-width="3"/></g></svg>
<span class="t" style="left:113.5px;top:1201px;letter-spacing:0.39px">United Kingdom</span>
<span class="t" style="left:516.5px;top:1201px;letter-spacing:-0.4px">English</span>
<span class="t" style="left:3534.5px;top:1201px;letter-spacing:-0.11px">09/07/2024</span>
<svg class="i" style="left:48px;top:1280.5px" width="48" height="36" viewBox="0 0 48 36"><rect x="1.5" y="1.5" width="45" height="17" fill="#F2FAFF" stroke="#A3B7CC" stroke-width="3"/><rect x="1.5" y="19" width="45" height="15.5" fill="#F78F8F" stroke="#C74343" stroke-width="3"/><path d="M1.5 2.5 L23 18 L1.5 33.5 Z" fill="#8BB7F0" stroke="#4E7AB5" stroke-width="3" stroke-linejoin="miter"/></svg>
<span class="t" style="left:114.5px;top:1280px;letter-spacing:-0.81px">Czech Republic</span>
<span class="t" style="left:516.5px;top:1280px;letter-spacing:-0.4px">Czech</span>
<span class="t" style="left:3534.5px;top:1280px;letter-spacing:-0.11px">09/07/2024</span>
<svg class="i" style="left:48px;top:1359.5px" width="48" height="36" viewBox="0 0 48 36"><rect x="1.5" y="1.5" width="45" height="17" fill="#F2FAFF" stroke="#A3B7CC" stroke-width="3"/><rect x="1.5" y="19" width="45" height="15.5" fill="#F78F8F" stroke="#C74343" stroke-width="3"/><path d="M1.5 2.5 L23 18 L1.5 33.5 Z" fill="#8BB7F0" stroke="#4E7AB5" stroke-width="3" stroke-linejoin="miter"/></svg>
<span class="t" style="left:114.5px;top:1359px;letter-spacing:-0.81px">Czech Republic</span>
<span class="t" style="left:516.5px;top:1359px;letter-spacing:-0.4px">Czech</span>
<span class="t" style="left:3534.5px;top:1359px;letter-spacing:-0.11px">09/07/2024</span>
<svg class="i" style="left:48px;top:1438.5px" width="48" height="36" viewBox="0 0 48 36"><rect x="1.5" y="1.5" width="45" height="33" fill="#FFEEA3" stroke="#C74343" stroke-width="3"/><rect x="1.5" y="1.5" width="45" height="6.5" fill="#F78F8F" stroke="#C74343" stroke-width="3"/><rect x="1.5" y="28" width="45" height="6.5" fill="#F78F8F" stroke="#C74343" stroke-width="3"/><path d="M1.5 9.5 V26.5 M46.5 9.5 V26.5" stroke="#F5C276" stroke-width="3"/><path d="M10 13.5 H16.5 V19 Q16.5 22.5 13.25 22.5 Q10 22.5 10 19 Z" fill="#F78F8F" stroke="#C74343" stroke-width="2"/></svg>
<span class="t" style="left:114.5px;top:1438px;letter-spacing:-1px">Spain</span>
<span class="t" style="left:516.5px;top:1438px;letter-spacing:-0.4px">Spanish</span>
<span class="t" style="left:3534.5px;top:1438px;letter-spacing:-0.11px">22/02/2024</span>
<svg class="i" style="left:48px;top:1517.5px" width="48" height="36" viewBox="0 0 48 36"><rect x="1.5" y="1.5" width="45" height="11" fill="#F2FAFF" stroke="#A3B7CC" stroke-width="3"/><rect x="1.5" y="12.5" width="45" height="11" fill="#8BB7F0" stroke="#4E7AB5" stroke-width="3"/><rect x="1.5" y="23.5" width="45" height="11" fill="#F78F8F" stroke="#C74343" stroke-width="3"/><path d="M8 8 H19.5 V18 Q19.5 23.5 13.75 26.5 Q8 23.5 8 18 Z" fill="#fff"/><path d="M10.6 9.7 H16.9 V17 Q16.9 20.5 13.75 21.5 Q10.6 20.5 10.6 17 Z" fill="#F78F8F" stroke="#C74343" stroke-width="1.6"/></svg>
<span class="t" style="left:114.5px;top:1517px;letter-spacing:-1.14px">Slovakia</span>
<span class="t" style="left:516.5px;top:1517px;letter-spacing:-0.4px">Slovak</span>
<span class="t" style="left:3534.5px;top:1517px;letter-spacing:-0.11px">09/07/2024</span>
<svg class="i" style="left:48px;top:1596.5px" width="48" height="36" viewBox="0 0 48 36"><rect x="1.5" y="1.5" width="45" height="33" fill="#F78F8F" stroke="#C74343" stroke-width="3"/><rect x="1.5" y="1.5" width="16" height="33" fill="#99C99E" stroke="#5F9E73" stroke-width="3"/><circle cx="17.5" cy="18" r="8.7" fill="#FFEEA3"/><path d="M13.5 14 H21.5 V18.5 Q21.5 22.5 17.5 22.5 Q13.5 22.5 13.5 18.5 Z" fill="#F78F8F" stroke="#C74343" stroke-width="2"/></svg>
<span class="t" style="left:113.5px;top:1596px;letter-spacing:0.14px">Portugal</span>
<span class="t" style="left:516.5px;top:1596px;letter-spacing:-0.4px">Portuguese</span>
<span class="t" style="left:3534.5px;top:1596px;letter-spacing:-0.11px">22/02/2024</span>
<svg class="i" style="left:48px;top:1675.5px" width="48" height="36" viewBox="0 0 48 36"><rect x="1.5" y="1.5" width="45" height="33" fill="#8BB7F0" stroke="#4E7AB5" stroke-width="3"/><path d="M17.5 3 V33 M3 18 H45" stroke="#FFEEA3" stroke-width="6"/><path d="M14.5 1.5 H20.5 M14.5 34.5 H20.5 M1.5 15 V21 M46.5 15 V21" stroke="#F5C276" stroke-width="3"/></svg>
<span class="t" style="left:114.5px;top:1675px;letter-spacing:-1px">Sweden</span>
<span class="t" style="left:516.5px;top:1675px;letter-spacing:-0.4px">Swedish</span>
<span class="t" style="left:3534.5px;top:1675px">20/03/2021</span>
<svg class="i" style="left:48px;top:1754.5px" width="48" height="36" viewBox="0 0 48 36"><rect x="1.5" y="1.5" width="45" height="17" fill="#F2FAFF" stroke="#A3B7CC" stroke-width="3"/><rect x="1.5" y="19" width="45" height="15.5" fill="#F78F8F" stroke="#C74343" stroke-width="3"/><path d="M1.5 2.5 L23 18 L1.5 33.5 Z" fill="#8BB7F0" stroke="#4E7AB5" stroke-width="3" stroke-linejoin="miter"/></svg>
<span class="t" style="left:114.5px;top:1754px;letter-spacing:-0.81px">Czech Republic</span>
<span class="t" style="left:516.5px;top:1754px;letter-spacing:-0.4px">Czech</span>
<span class="t" style="left:3534.5px;top:1754px;letter-spacing:0.33px">03/11/2017</span>
<svg class="i" style="left:48px;top:1833.5px" width="48" height="36" viewBox="0 0 48 36"><rect x="1.5" y="19" width="45" height="15.5" fill="#FFEEA3" stroke="#F5C276" stroke-width="3"/><rect x="1.5" y="1.5" width="45" height="17" fill="#8BB7F0" stroke="#4E7AB5" stroke-width="3"/></svg>
<span class="t" style="left:113.5px;top:1833px;letter-spacing:-0.17px">Ukraine</span>
<span class="t" style="left:516.5px;top:1833px;letter-spacing:-0.4px">Ukrainian</span>
<span class="t" style="left:3534.5px;top:1833px;letter-spacing:-0.11px">09/07/2024</span>
<div class="b" style="left:3771.5px;top:680px;width:8.5px;height:149px;background:#8e8e8e;border-radius:4.3px"></div>
<div class="b" style="left:63.5px;top:1919.5px;width:744.5px;height:72px;background:#fff;border:3px solid #dedede;border-bottom-color:#cfcfcf;border-radius:11px;box-sizing:border-box"></div>
<svg class="i" style="left:80px;top:1940px" width="40" height="32" viewBox="0 0 40 32"><path d="M3.3 4 V28 M19.5 4.5 L8.5 16 L19.5 27.5 M35 4.5 L24 16 L35 27.5" fill="none" stroke="#7a7a7a" stroke-width="3"/></svg>
<svg class="i" style="left:157px;top:1940px" width="40" height="32" viewBox="0 0 40 32"><path d="M14 4.5 L3 16 L14 27.5 M28.5 4.5 L17.5 16 L28.5 27.5" fill="none" stroke="#7a7a7a" stroke-width="3"/></svg>
<svg class="i" style="left:234px;top:1940px" width="40" height="32" viewBox="0 0 40 32"><path d="M16.5 4.5 L4.5 16 L16.5 27.5" fill="none" stroke="#7a7a7a" stroke-width="3"/></svg>
<span class="t" style="left:310.5px;top:1938.5px;letter-spacing:-0.14px">Record 1 of 115</span>
<svg class="i" style="left:620px;top:1940px" width="40" height="32" viewBox="0 0 40 32"><path d="M3 4.5 L15 16 L3 27.5" fill="none" stroke="#222" stroke-width="3.2"/></svg>
<svg class="i" style="left:686px;top:1940px" width="40" height="32" viewBox="0 0 40 32"><path d="M3.5 4.5 L14.5 16 L3.5 27.5 M18 4.5 L29 16 L18 27.5" fill="none" stroke="#222" stroke-width="3.2"/></svg>
<svg class="i" style="left:755px;top:1940px" width="40" height="32" viewBox="0 0 40 32"><path d="M3.5 4.5 L14.5 16 L3.5 27.5 M18 4.5 L29 16 L18 27.5 M34.5 4 V28" fill="none" stroke="#222" stroke-width="3.2"/></svg>
<div class="b panel" style="left:36.5px;top:543px;width:3767.5px;height:1477px"></div>
<div class="b" style="left:0px;top:2056px;width:3840px;height:3px;background:#cdcdcd"></div>
<div class="b" style="left:0px;top:2059px;width:3840px;height:101px;background:#fafafa"></div>
<div class="b dlg" style="left:536.4px;top:519px;width:2898px;height:1407px"></div>
<svg class="i" style="left:560.9px;top:536.9px" width="52" height="52" viewBox="0 0 52 52"><circle cx="26" cy="26" r="7" fill="#3BB54A"/><path d="M26.45 13.01 A13 13 0 1 0 38.93 24.64 M24.86 4.33 A21.7 21.7 0 1 1 4.31 25.24" fill="none" stroke="#358CCF" stroke-width="4.4" stroke-linecap="round"/></svg>
<span class="t g3" style="left:634.7px;top:546.2px;letter-spacing:0.08px">Poison Centre Notification</span>
<svg class="i" style="left:3232px;top:544px" width="40" height="40" viewBox="0 0 40 40"><rect x="5.5" y="5.5" width="27" height="27.5" rx="3" fill="none" stroke="#1b1b1b" stroke-width="3"/></svg>
<svg class="i" style="left:3352px;top:544px" width="40" height="40" viewBox="0 0 40 40"><path d="M5.5 5 L34 33.5 M34 5 L5.5 33.5" fill="none" stroke="#1b1b1b" stroke-width="3"/></svg>
<span class="t g3" style="left:573.1px;top:667px;letter-spacing:0.63px">Notification type</span>
<span class="t g3" style="left:573.1px;top:757px;letter-spacing:1.07px">Notifier</span>
<span class="t g3" style="left:574.7px;top:845.3px;letter-spacing:-0.08px">Active market</span>
<div class="b fld" style="left:1056.4px;top:646.2px;width:2339.6px;height:76.2px;border-bottom:5.5px solid #2A72B0"></div>
<div class="b fld" style="left:1056.4px;top:736.2px;width:2339.6px;height:76.2px;border-bottom:3.5px solid #9a9a9a"></div>
<div class="b fld" style="left:1056.4px;top:824px;width:2339.6px;height:76.2px;background:#fafafa;border-color:#e8e8e8"></div>
<span class="t" style="left:1065.5px;top:666.7px;letter-spacing:0.71px">Initial notification</span>
<span class="t" style="left:1067.5px;top:757px;letter-spacing:0.11px">Trial ltd.</span>
<svg class="i" style="left:1074px;top:839.7px" width="48" height="36" viewBox="0 0 48 36"><rect x="15" y="1.5" width="18" height="33" fill="#F2FAFF" stroke="#A3B7CC" stroke-width="3"/><rect x="1.5" y="1.5" width="13" height="33" fill="#99C99E" stroke="#5F9E73" stroke-width="3"/><rect x="33.5" y="1.5" width="13" height="33" fill="#FFC49C" stroke="#B08357" stroke-width="3"/></svg>
<span class="t ga" style="left:1140.5px;top:844px;letter-spacing:0.33px">Ireland</span>
<svg class="i" style="left:3346.5px;top:676.25px" width="28" height="16.5" viewBox="0 0 28 16.5"><path d="M2 2 L14 13.5 L26 2" fill="none" stroke="#222" stroke-width="3.2"/></svg>
<svg class="i" style="left:3346.5px;top:766.25px" width="28" height="16.5" viewBox="0 0 28 16.5"><path d="M2 2 L14 13.5 L26 2" fill="none" stroke="#222" stroke-width="3.2"/></svg>
<div class="b" style="left:1057px;top:920px;width:46.5px;height:46.5px;background:#fff;border:3px solid #d8d8d8;border-bottom-color:#cacaca;border-radius:9px;box-sizing:border-box"></div>
<span class="t g3" style="left:1117.3px;top:926px;letter-spacing:-0.1px">Attach </span><span class="t g3" style="left:1228.7px;top:926px;letter-spacing:-1px">safety </span><span class="t g3" style="left:1331.1px;top:926px;letter-spacing:-1px">data </span><span class="t g3" style="left:1409.9px;top:926px;letter-spacing:-0.88px">sheet </span><span class="t g3" style="left:1505.7px;top:926px;letter-spacing:-4px">in </span><span class="t g3" style="left:1543.5px;top:926px;letter-spacing:-4.25px">PDF</span>
<div class="b" style="left:574.6px;top:986.6px;width:2821.6px;height:742px;background:#fafafa;border:3px solid #d2d2d2;border-radius:10px;box-sizing:border-box"></div>
<span class="t ga" style="left:608.5px;top:1000.7px;letter-spacing:-0.36px">Errors and warnings</span>
<div class="b" style="left:578px;top:1047px;width:2815px;height:3px;background:#d0d0d0"></div>
<div class="b" style="left:578px;top:1050px;width:2815px;height:81px;background:#fafafa"></div>
<div class="b" style="left:1615.5px;top:1050px;width:1469px;height:81px;background:#f3f3f3"></div>
<div class="b" style="left:578px;top:1131px;width:2815px;height:82px;background:#e6e6e6"></div>
<div class="b" style="left:578px;top:1213px;width:2815px;height:512.5px;background:#fff;border-radius:0 0 7px 7px"></div>
<div class="b" style="left:578px;top:1288px;width:2815px;height:3px;background:#e5e5e5"></div>
<div class="b" style="left:783px;top:1051px;width:3px;height:80px;background:#e7e7e7"></div>
<div class="b" style="left:783px;top:1213px;width:3px;height:76px;background:#e7e7e7"></div>
<div class="b" style="left:947px;top:1051px;width:3px;height:80px;background:#e7e7e7"></div>
<div class="b" style="left:947px;top:1213px;width:3px;height:76px;background:#e7e7e7"></div>
<div class="b" style="left:1613px;top:1051px;width:3px;height:80px;background:#e7e7e7"></div>
<div class="b" style="left:1613px;top:1213px;width:3px;height:76px;background:#e7e7e7"></div>
<div class="b" style="left:3084.3px;top:1051px;width:3px;height:80px;background:#e7e7e7"></div>
<div class="b" style="left:3084.3px;top:1213px;width:3px;height:76px;background:#e7e7e7"></div>
<span class="t ga" style="left:594.5px;top:1074.5px;letter-spacing:-0.67px">Type</span>
<span class="t ga" style="left:800.5px;top:1074.5px;letter-spacing:-0.33px">Code</span>
<span class="t ga" style="left:964.5px;top:1074.5px;letter-spacing:-0.53px">Safety data sheet</span>
<span class="t g3" style="left:1630.5px;top:1074.5px;letter-spacing:0.35px">Description</span>
<span class="t ga" style="left:3102.7px;top:1074.5px">Value</span>
<svg class="i" style="left:3022px;top:1073px" width="44" height="38" viewBox="0 0 44 38"><path d="M5 5.5 H38.5 L25.5 19 V32.5 H18 V19 Z" fill="none" stroke="#1b1b1b" stroke-width="3" stroke-linejoin="miter"/></svg>
<svg class="i" style="left:588px;top:1149px" width="46" height="46" viewBox="0 0 46 46"> <rect x="-15.4" y="-15.4" width="30.8" height="30.8" rx="5.5" transform="translate(23 23) rotate(45)" fill="#F78F8F" stroke="#C74343" stroke-width="3"/></svg>
<span class="t g5" style="left:652.9px;top:1153.3px;letter-spacing:-0.5px">Error</span>
<span class="t g5" style="left:797.5px;top:1153.3px;letter-spacing:-2.12px">BR530</span>
<span class="t g5" style="left:961.3px;top:1153.3px;letter-spacing:-3.42px">EXAMPLE </span><span class="t g5" style="left:1120.5px;top:1153.3px;letter-spacing:-0.44px">Dangerous </span><span class="t g5" style="left:1303.3px;top:1153.3px;letter-spacing:0.5px">mixture</span>
<span class="t g5" style="left:1626.5px;top:1153.3px;letter-spacing:0.01px">Enter the color in section 9 "Properties".</span>
<span class="t g5" style="left:3097.5px;top:1153.3px;letter-spacing:-3.25px">EXAMPLE </span><span class="t g5" style="left:3257.1px;top:1153.3px;letter-spacing:-0.58px">Dang...</span>
<svg class="i" style="left:588px;top:1228.2px" width="46" height="46" viewBox="0 0 46 46"> <rect x="-15.4" y="-15.4" width="30.8" height="30.8" rx="5.5" transform="translate(23 23) rotate(45)" fill="#F78F8F" stroke="#C74343" stroke-width="3"/></svg>
<span class="t" style="left:652.9px;top:1232.5px;letter-spacing:-0.5px">Error</span>
<span class="t" style="left:797.5px;top:1232.5px;letter-spacing:-2.12px">BR537</span>
<span class="t" style="left:961.3px;top:1232.5px;letter-spacing:-3.42px">EXAMPLE </span><span class="t" style="left:1120.5px;top:1232.5px;letter-spacing:-0.44px">Dangerous </span><span class="t" style="left:1303.3px;top:1232.5px;letter-spacing:0.5px">mixture</span>
<span class="t" style="left:1626.5px;top:1232.5px;letter-spacing:0.21px">Fill in the package content in the “Identification” section.</span>
<div class="b btn" style="left:581px;top:1792.5px;width:391.5px;height:87.5px"></div>
<div class="b btn" style="left:998px;top:1792.5px;width:503px;height:87.5px"></div>
<div class="b" style="left:2426px;top:1791.5px;width:547px;height:89px;background:#fff;border:6px solid #2A76AB;border-radius:12px;box-sizing:border-box"></div>
<div class="b btn" style="left:2997.5px;top:1792.5px;width:392px;height:87.5px"></div>
<svg class="i" style="left:604px;top:1813px" width="48" height="48" viewBox="0 0 48 48"><rect x="24" y="7.5" width="22.5" height="33" fill="#fff" stroke="#5F9E73" stroke-width="2.6"/><path d="M31 16 H42 M31 22 H42 M31 28 H42 M31 34 H42" stroke="#DCE6F1" stroke-width="2.6"/><path d="M1.5 8 L28.5 1.8 V46.2 L1.5 40 Z" fill="#B5DDB7" stroke="#5F9E73" stroke-width="2.6"/><text x="14.8" y="33.3" text-anchor="middle" font-family="'Liberation Sans',sans-serif" font-weight="700" font-size="25" fill="#fff">X</text></svg>
<span class="t" style="left:761.5px;top:1820px;letter-spacing:-1.88px">Excel</span>
<svg class="i" style="left:1021px;top:1812.8px" width="48" height="48" viewBox="0 0 48 48"><g stroke="#CDB0DD" stroke-width="4.2" stroke-linecap="round" fill="none"><path d="M2.5 24 H16 M32 24 H45.5 M8.8 8.8 L18 18 M39.2 8.8 L30 18 M8.8 39.2 L18 30 M39.2 39.2 L30 30 M24 32 V45.5"/></g><path d="M20.4 3.6 A3.6 3.6 0 0 1 27.6 3.6 L25.7 16.5 A1.7 1.7 0 0 1 22.3 16.5 Z" fill="#6B2F87"/><circle cx="24" cy="24" r="2.4" fill="#6B2F87"/></svg>
<span class="t" style="left:1177.5px;top:1820px;letter-spacing:-0.85px">PCN dossier</span>
<svg class="i" style="left:2448px;top:1811px" width="50" height="50" viewBox="0 0 50 50"><circle cx="24.7" cy="24.4" r="21" fill="#8BB7F0" stroke="#4E7AB5" stroke-width="2.6"/><text x="24.9" y="35" text-anchor="middle" font-family="'Liberation Mono',monospace" font-weight="700" font-size="31" fill="#fff">i</text></svg>
<span class="t" style="left:2580.5px;top:1820px;letter-spacing:-0.28px">Notify online (S<span class="sub">2</span>S)</span>
<svg class="i" style="left:3021px;top:1813px" width="45" height="45" viewBox="0 0 45 45"><path d="M2.62 2.62 L42.38 42.38 M42.38 2.62 L2.62 42.38" stroke="#B23B3B" stroke-width="7.4" fill="none"/><path d="M4.52 4.52 L40.48 40.48 M40.48 4.52 L4.52 40.48" stroke="#F78F8F" stroke-width="2" fill="none"/></svg>
<span class="t" style="left:3165.5px;top:1820px;letter-spacing:-1.3px">Cancel</span>
<div class="b" style="left:0;top:2158.6px;width:3840px;height:1.4px;background:#111"></div>
</div></body></html>
